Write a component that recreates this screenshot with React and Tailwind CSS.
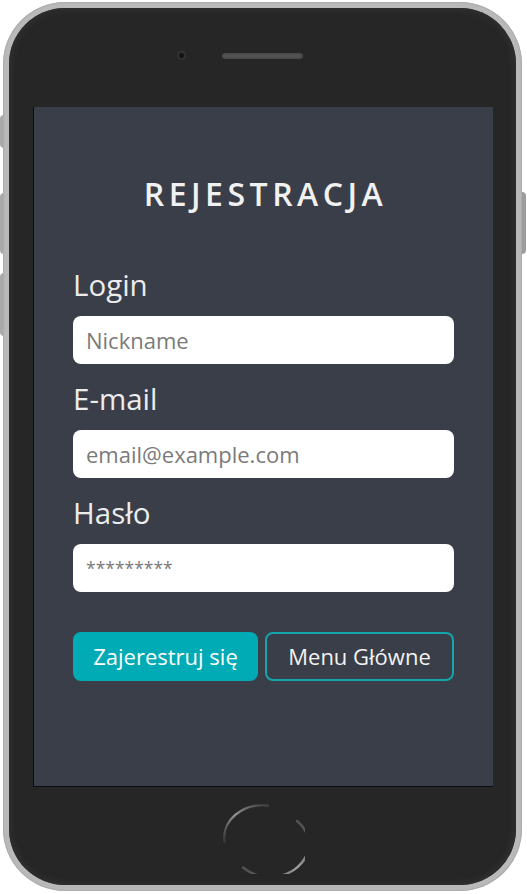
import { useState } from 'react';

const font = { fontFamily: '"Open Sans", "Noto Sans", sans-serif' };

const HomeButton = () => (
  <svg width="84" height="72" viewBox="0 0 84 72" fill="none">
    <defs>
      <linearGradient id="ringA" x1="0" y1="1" x2="1" y2="0">
        <stop offset="0" stopColor="#777" stopOpacity="0.25" />
        <stop offset="0.5" stopColor="#959595" />
        <stop offset="1" stopColor="#777" stopOpacity="0.35" />
      </linearGradient>
      <linearGradient id="ringB" x1="1" y1="0" x2="0" y2="1">
        <stop offset="0" stopColor="#808080" stopOpacity="0.35" />
        <stop offset="0.5" stopColor="#a0a0a0" />
        <stop offset="1" stopColor="#808080" stopOpacity="0.35" />
      </linearGradient>
    </defs>
    {/* upper-left arc */}
    <path d="M3.5 40 A38.5 32.5 0 0 1 47 3.6" stroke="url(#ringA)" strokeWidth="2.2" strokeLinecap="round" />
    {/* lower-right arc */}
    <path d="M76 19 A38.5 32.5 0 0 1 22 65.5" stroke="url(#ringB)" strokeWidth="2.4" strokeLinecap="round" />
  </svg>
);

const Field = ({ label, placeholder, type = 'text', small }) => {
  const [value, setValue] = useState('');
  return (
    <div className="flex flex-col">
      <label className="text-[29.5px] leading-[36px] text-[#ececec]">{label}</label>
      <input
        type={type}
        value={value}
        onChange={(e) => setValue(e.target.value)}
        placeholder={placeholder}
        className={
          small
            ? 'mt-[13px] mb-[17px] h-12 w-full rounded-lg bg-white px-[13px] text-[17.5px] text-[#444] outline-none placeholder:text-[#7a7a7a]'
            : 'mt-[13px] mb-[17px] h-12 w-full rounded-lg bg-white px-[13px] text-[22px] text-[#444] outline-none placeholder:text-[#7a7a7a]'
        }
        style={font}
      />
    </div>
  );
};

export default function App() {
  return (
    <div className="relative h-[894px] w-[527px] bg-white overflow-hidden" style={font}>
      {/* side buttons */}
      <div className="absolute left-0 top-[115px] h-[33px] w-[4px] rounded-l-sm bg-[#a9a9a9]" />
      <div className="absolute left-0 top-[193px] h-[61px] w-[4px] rounded-l-sm bg-[#a9a9a9]" />
      <div className="absolute left-0 top-[273px] h-[63px] w-[4px] rounded-l-sm bg-[#a9a9a9]" />
      <div className="absolute right-[1px] top-[192px] h-[62px] w-[4px] rounded-r-sm bg-[#9c9c9c]" />

      {/* phone body */}
      <div className="absolute left-[3px] top-[2px] h-[889px] w-[519px] rounded-[62px] bg-[#b9b9b9] p-[6px] shadow-[inset_0_0_2px_#8d8d8d]">
        <div className="flex h-full w-full flex-col rounded-[56px] bg-[#262626] shadow-[inset_0_0_6px_3px_#303030]">
          {/* top bezel */}
          <div className="flex h-[99px] items-start pl-[168px] pt-[43px]">
            <div className="flex items-center gap-[36px]">
              <div className="h-[9px] w-[9px] rounded-full border border-[#3d3d3d] bg-[#141418] shadow-[inset_0_0_2px_#555]" />
              <div className="h-[6px] w-[81px] rounded-full bg-[#525252] shadow-[inset_0_0_2px_#2a2a2a]" />
            </div>
          </div>

          {/* screen */}
          <div className="mx-[24px] flex h-[680px] w-[460px] flex-col border-b border-l border-[#0c0c10] bg-[#3a3e48] px-[39px] pt-[67px]">
            <h1 className="pl-[4px] text-center text-[32px] font-semibold leading-[40px] tracking-[4.5px] text-[#f1f1f1]">
              REJESTRACJA
            </h1>
            <div className="mt-[53px] flex flex-col">
              <Field label="Login" placeholder="Nickname" />
              <Field label="E-mail" placeholder="email@example.com" type="email" />
              <Field label="Hasło" placeholder="*********" type="password" small />
            </div>
            <div className="mt-[23px] flex gap-[7px]">
              <button className="h-[49px] flex-1 rounded-lg bg-[#00abb5] text-[22px] text-white">
                Zajerestruj się
              </button>
              <button className="h-[49px] flex-1 rounded-lg border-2 border-[#14a5ad] text-[22px] text-[#f2f2f2]">
                Menu Główne
              </button>
            </div>
          </div>

          {/* bottom bezel */}
          <div className="flex flex-1 items-start justify-center pt-[15px]">
            <HomeButton />
          </div>
        </div>
      </div>
    </div>
  );
}
